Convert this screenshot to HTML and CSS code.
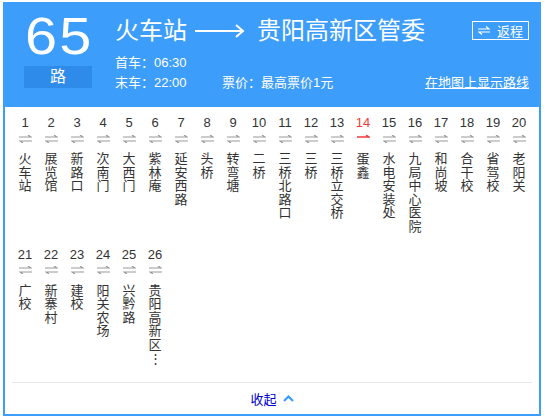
FILE: index.html
```html
<!DOCTYPE html>
<html lang="zh">
<head>
<meta charset="utf-8">
<title>65路</title>
<link rel="stylesheet" href="styles.css">
</head>
<body>
<div class="card">
  <div class="header">
    <div class="line-no">
      <div class="num">65</div>
      <div class="lu">路</div>
    </div>
    <div class="main">
      <div class="title-row">
        <div class="title">
          <span>火车站</span>
          <svg class="big-arrow" width="50" height="14" viewBox="0 0 50 14"><path d="M0 7H48M41 1L48 7L41 13" fill="none" stroke="#fff" stroke-width="2"/></svg>
          <span>贵阳高新区管委</span>
        </div>
        <div class="return-btn">
          <svg width="12" height="9" viewBox="0 0 12 9"><path d="M0 3H11L8 0.5M12 6H1L4 8.5" fill="none" stroke="#fff" stroke-width="1.2"/></svg>
          <span>返程</span>
        </div>
      </div>
      <div class="info">首车：06:30</div>
      <div class="info info-row">
        <span class="info-last">末车：22:00</span>
        <span>票价：最高票价1元</span>
        <a class="map-link" href="#">在地图上显示路线</a>
      </div>
    </div>
  </div>

  <div class="stations">
    <div class="st"><div class="no">1</div><div class="arr"><svg width="13" height="8" viewBox="0 0 13 8"><path d="M0 2H12L9 0M13 6H1L4 8" fill="none" stroke="#9a9a9a" stroke-width="1.2"/></svg></div><div class="name">火车站</div></div>
    <div class="st"><div class="no">2</div><div class="arr"><svg width="13" height="8" viewBox="0 0 13 8"><path d="M0 2H12L9 0M13 6H1L4 8" fill="none" stroke="#9a9a9a" stroke-width="1.2"/></svg></div><div class="name">展览馆</div></div>
    <div class="st"><div class="no">3</div><div class="arr"><svg width="13" height="8" viewBox="0 0 13 8"><path d="M0 2H12L9 0M13 6H1L4 8" fill="none" stroke="#9a9a9a" stroke-width="1.2"/></svg></div><div class="name">新路口</div></div>
    <div class="st"><div class="no">4</div><div class="arr"><svg width="13" height="8" viewBox="0 0 13 8"><path d="M0 2H12L9 0M13 6H1L4 8" fill="none" stroke="#9a9a9a" stroke-width="1.2"/></svg></div><div class="name">次南门</div></div>
    <div class="st"><div class="no">5</div><div class="arr"><svg width="13" height="8" viewBox="0 0 13 8"><path d="M0 2H12L9 0M13 6H1L4 8" fill="none" stroke="#9a9a9a" stroke-width="1.2"/></svg></div><div class="name">大西门</div></div>
    <div class="st"><div class="no">6</div><div class="arr"><svg width="13" height="8" viewBox="0 0 13 8"><path d="M0 2H12L9 0M13 6H1L4 8" fill="none" stroke="#9a9a9a" stroke-width="1.2"/></svg></div><div class="name">紫林庵</div></div>
    <div class="st"><div class="no">7</div><div class="arr"><svg width="13" height="8" viewBox="0 0 13 8"><path d="M0 2H12L9 0M13 6H1L4 8" fill="none" stroke="#9a9a9a" stroke-width="1.2"/></svg></div><div class="name">延安西路</div></div>
    <div class="st"><div class="no">8</div><div class="arr"><svg width="13" height="8" viewBox="0 0 13 8"><path d="M0 2H12L9 0M13 6H1L4 8" fill="none" stroke="#9a9a9a" stroke-width="1.2"/></svg></div><div class="name">头桥</div></div>
    <div class="st"><div class="no">9</div><div class="arr"><svg width="13" height="8" viewBox="0 0 13 8"><path d="M0 2H12L9 0M13 6H1L4 8" fill="none" stroke="#9a9a9a" stroke-width="1.2"/></svg></div><div class="name">转弯塘</div></div>
    <div class="st"><div class="no">10</div><div class="arr"><svg width="13" height="8" viewBox="0 0 13 8"><path d="M0 2H12L9 0M13 6H1L4 8" fill="none" stroke="#9a9a9a" stroke-width="1.2"/></svg></div><div class="name">二桥</div></div>
    <div class="st"><div class="no">11</div><div class="arr"><svg width="13" height="8" viewBox="0 0 13 8"><path d="M0 2H12L9 0M13 6H1L4 8" fill="none" stroke="#9a9a9a" stroke-width="1.2"/></svg></div><div class="name">三桥北路口</div></div>
    <div class="st"><div class="no">12</div><div class="arr"><svg width="13" height="8" viewBox="0 0 13 8"><path d="M0 2H12L9 0M13 6H1L4 8" fill="none" stroke="#9a9a9a" stroke-width="1.2"/></svg></div><div class="name">三桥</div></div>
    <div class="st"><div class="no">13</div><div class="arr"><svg width="13" height="8" viewBox="0 0 13 8"><path d="M0 2H12L9 0M13 6H1L4 8" fill="none" stroke="#9a9a9a" stroke-width="1.2"/></svg></div><div class="name">三桥立交桥</div></div>
    <div class="st st-current"><div class="no">14</div><div class="arr"><svg width="13" height="8" viewBox="0 0 13 8"><path d="M0 2H12L9 0" fill="none" stroke="#f03c3c" stroke-width="1.4"/></svg></div><div class="name">蛋鑫</div></div>
    <div class="st"><div class="no">15</div><div class="arr"><svg width="13" height="8" viewBox="0 0 13 8"><path d="M0 2H12L9 0M13 6H1L4 8" fill="none" stroke="#9a9a9a" stroke-width="1.2"/></svg></div><div class="name">水电安装处</div></div>
    <div class="st"><div class="no">16</div><div class="arr"><svg width="13" height="8" viewBox="0 0 13 8"><path d="M0 2H12L9 0M13 6H1L4 8" fill="none" stroke="#9a9a9a" stroke-width="1.2"/></svg></div><div class="name">九局中心医院</div></div>
    <div class="st"><div class="no">17</div><div class="arr"><svg width="13" height="8" viewBox="0 0 13 8"><path d="M0 2H12L9 0M13 6H1L4 8" fill="none" stroke="#9a9a9a" stroke-width="1.2"/></svg></div><div class="name">和尚坡</div></div>
    <div class="st"><div class="no">18</div><div class="arr"><svg width="13" height="8" viewBox="0 0 13 8"><path d="M0 2H12L9 0M13 6H1L4 8" fill="none" stroke="#9a9a9a" stroke-width="1.2"/></svg></div><div class="name">合干校</div></div>
    <div class="st"><div class="no">19</div><div class="arr"><svg width="13" height="8" viewBox="0 0 13 8"><path d="M0 2H12L9 0M13 6H1L4 8" fill="none" stroke="#9a9a9a" stroke-width="1.2"/></svg></div><div class="name">省驾校</div></div>
    <div class="st"><div class="no">20</div><div class="arr"><svg width="13" height="8" viewBox="0 0 13 8"><path d="M0 2H12L9 0M13 6H1L4 8" fill="none" stroke="#9a9a9a" stroke-width="1.2"/></svg></div><div class="name">老阳关</div></div>
    <div class="st"><div class="no">21</div><div class="arr"><svg width="13" height="8" viewBox="0 0 13 8"><path d="M0 2H12L9 0M13 6H1L4 8" fill="none" stroke="#9a9a9a" stroke-width="1.2"/></svg></div><div class="name">广校</div></div>
    <div class="st"><div class="no">22</div><div class="arr"><svg width="13" height="8" viewBox="0 0 13 8"><path d="M0 2H12L9 0M13 6H1L4 8" fill="none" stroke="#9a9a9a" stroke-width="1.2"/></svg></div><div class="name">新寨村</div></div>
    <div class="st"><div class="no">23</div><div class="arr"><svg width="13" height="8" viewBox="0 0 13 8"><path d="M0 2H12L9 0M13 6H1L4 8" fill="none" stroke="#9a9a9a" stroke-width="1.2"/></svg></div><div class="name">建校</div></div>
    <div class="st"><div class="no">24</div><div class="arr"><svg width="13" height="8" viewBox="0 0 13 8"><path d="M0 2H12L9 0M13 6H1L4 8" fill="none" stroke="#9a9a9a" stroke-width="1.2"/></svg></div><div class="name">阳关农场</div></div>
    <div class="st"><div class="no">25</div><div class="arr"><svg width="13" height="8" viewBox="0 0 13 8"><path d="M0 2H12L9 0M13 6H1L4 8" fill="none" stroke="#9a9a9a" stroke-width="1.2"/></svg></div><div class="name">兴黔路</div></div>
    <div class="st"><div class="no">26</div><div class="arr"><svg width="13" height="8" viewBox="0 0 13 8"><path d="M0 2H12L9 0M13 6H1L4 8" fill="none" stroke="#9a9a9a" stroke-width="1.2"/></svg></div><div class="name">贵阳高新区⋮</div></div>
  </div>

  <div class="footer">
    <a class="collapse" href="#">收起
      <svg width="11" height="7" viewBox="0 0 11 7"><path d="M1 6L5.5 1.5L10 6" fill="none" stroke="#3d9dfb" stroke-width="2.2"/></svg>
    </a>
  </div>
</div>
</body>
</html>
```

FILE: styles.css
```css
* { box-sizing: border-box; }

body {
  margin: 0;
  background: #fff;
  font-family: "Liberation Sans", "Noto Sans CJK SC", sans-serif;
  color: #333;
}

.card {
  margin: 2px 0 0 3px;
  width: 538px;
  height: 414px;
  border: 2px solid #3d9dfb;
  border-top-width: 0;
  display: flex;
  flex-direction: column;
}

.header {
  background: #3d9dfb;
  color: #fff;
  height: 105px;
  display: flex;
  padding: 10px 10px 0 19px;
  gap: 23px;
}

.line-no {
  width: 68px;
  display: flex;
  flex-direction: column;
  align-items: center;
}

.num {
  font-family: "Liberation Sans", sans-serif;
  font-size: 51px;
  line-height: 50px;
  letter-spacing: 2px;
  margin-right: -2px;
  transform: scaleX(1.13);
}

.lu {
  margin-top: 4px;
  width: 68px;
  height: 22px;
  background: #2f8bea;
  font-size: 16px;
  line-height: 22px;
  text-align: center;
}

.main {
  flex: 1;
  margin-top: 3px;
}

.title-row {
  display: flex;
  justify-content: space-between;
  align-items: center;
  height: 32px;
  margin-bottom: 6px;
}

.title {
  display: flex;
  align-items: center;
  font-size: 24px;
  line-height: 32px;
}

.big-arrow {
  margin: 0 12px 0 8px;
}

.return-btn {
  display: flex;
  align-items: center;
  gap: 7px;
  height: 19px;
  width: 57px;
  border: 1px solid #fff;
  padding-left: 5px;
  font-size: 13px;
  margin-top: -2px;
}

.info {
  font-size: 13px;
  line-height: 20px;
}

.info-row {
  display: flex;
}

.info-last {
  width: 107px;
}

.map-link {
  margin-left: auto;
  color: #fff;
  text-decoration: underline;
}

.stations {
  display: grid;
  grid-template-columns: repeat(20, 26px);
  row-gap: 14px;
  align-items: start;
  padding: 8px 7px 0;
  flex: 1;
  align-content: start;
}

.st {
  display: flex;
  flex-direction: column;
  align-items: center;
}

.no {
  font-size: 13px;
  line-height: 16px;
  color: #333;
}

.arr {
  height: 14px;
  display: flex;
  align-items: center;
  padding-top: 1px;
}

.arr svg { display: block; }

.name {
  margin-top: 6px;
  width: 13px;
  font-size: 13px;
  line-height: 13.6px;
  word-break: break-all;
  color: #333;
  font-family: "Noto Sans CJK SC", sans-serif;
}

.st-current .no { color: #f03c3c; }

.footer {
  margin: 0 7px;
  border-top: 1px solid #e8e8e8;
  height: 32px;
  display: flex;
  align-items: center;
  justify-content: center;
}

.collapse {
  display: flex;
  align-items: center;
  gap: 6px;
  font-size: 13px;
  color: #0000cc;
  text-decoration: none;
  font-family: "Noto Sans CJK SC", sans-serif;
}
```
